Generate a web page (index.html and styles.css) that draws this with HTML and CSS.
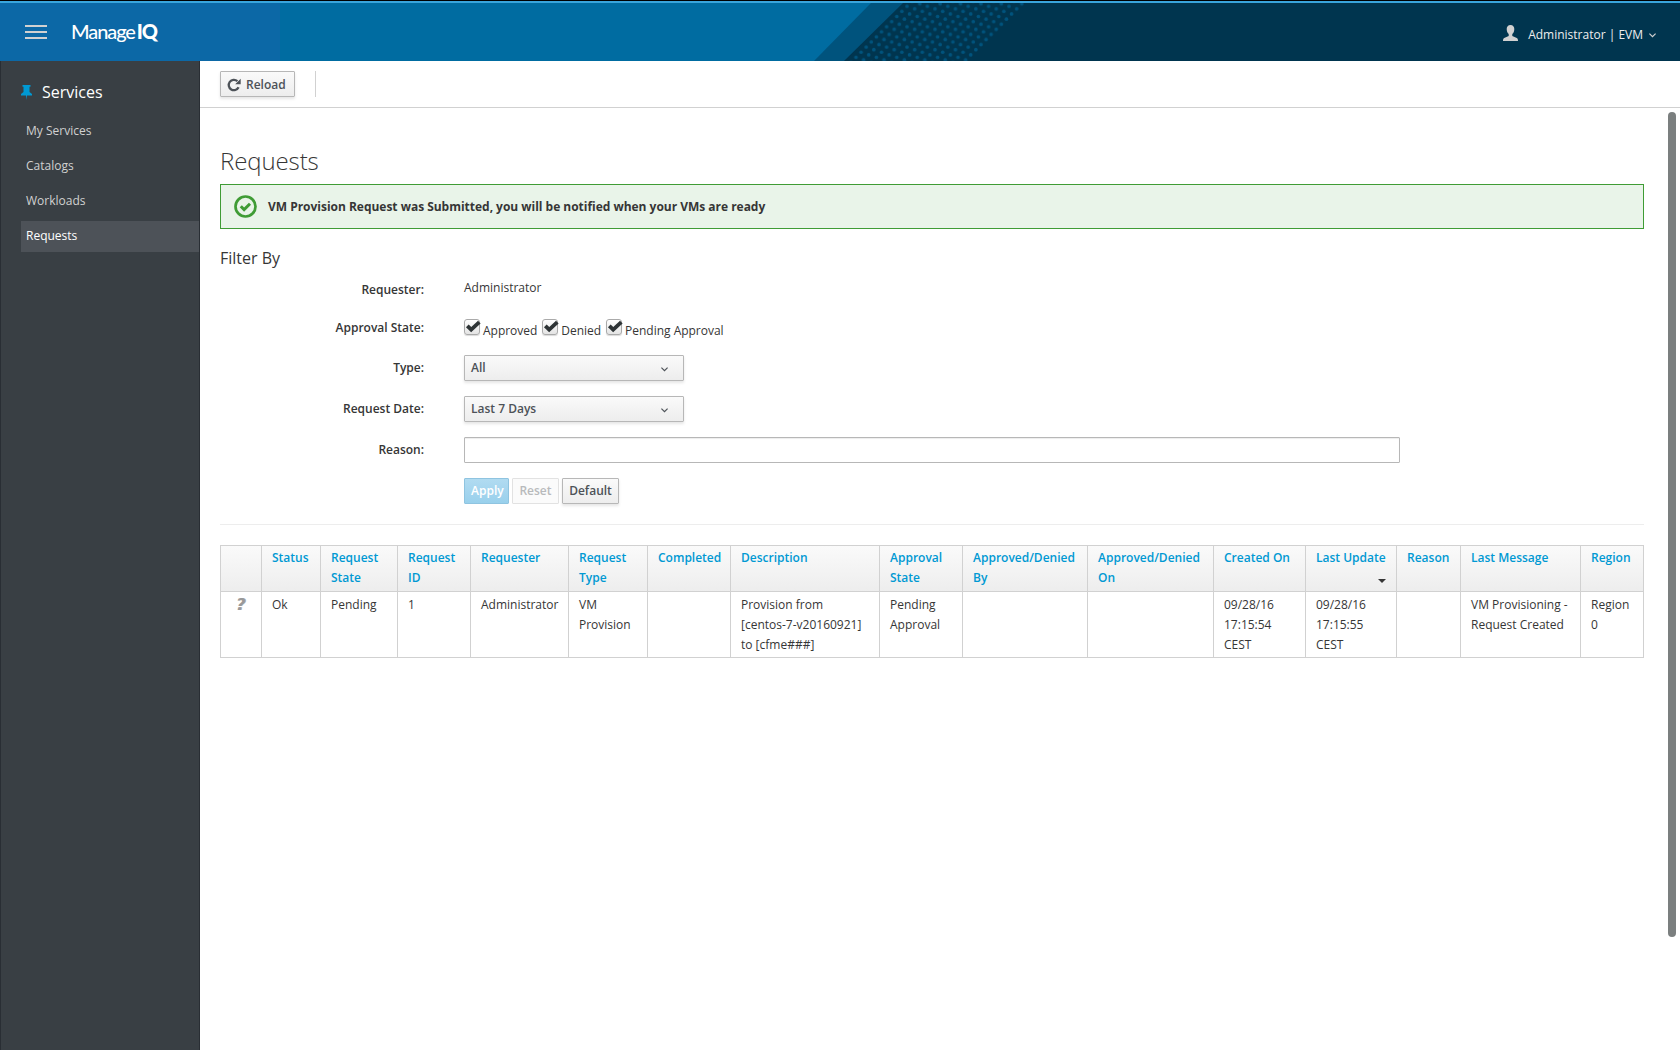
FILE: index.html
```html
<!DOCTYPE html>
<html lang="en">
<head>
    <meta charset="UTF-8">
    <meta name="viewport" content="width=device-width, initial-scale=1.0">
    <title>ManageIQ: Requests</title>
    <link rel="stylesheet" href="styles.css">
</head>
<body>
    <!-- TOP NAVBAR -->
    <header class="navbar">
        <svg class="navbar-bg" width="1680" height="58" viewBox="0 0 1680 58">
            <defs>
                <!-- slanted dot lattice -->
                <pattern id="dots" width="20.4" height="20.4" patternUnits="userSpaceOnUse" patternTransform="translate(907 3.300)">
                    <circle cx="0" cy="0" r="1.8"/>
                    <circle cx="20.4" cy="0" r="1.8"/>
                    <circle cx="0" cy="20.4" r="1.8"/>
                    <circle cx="20.4" cy="20.4" r="1.8"/>
                    <circle cx="15.3" cy="5.1" r="1.8"/>
                    <circle cx="10.2" cy="10.2" r="1.8"/>
                    <circle cx="5.1" cy="15.3" r="1.8"/>
                    <circle cx="7.65" cy="2.55" r="1.8"/>
                    <circle cx="2.55" cy="7.65" r="1.8"/>
                    <circle cx="17.85" cy="12.75" r="1.8"/>
                    <circle cx="12.75" cy="17.85" r="1.8"/>
                </pattern>
            </defs>
            <rect width="280" height="58" fill="#0c68a6"/>
            <path d="M871 0H1680V58H814z" fill="#00537d"/>
            <path d="M903 0H1680V58H844z" fill="#00354f"/>
            <path d="M906 0H1026L968 58H848z" fill="url(#dots)"/>
        </svg>
        <button class="menu-toggle"><span></span><span></span><span></span></button>
        <a class="brand">Manage<b>IQ</b></a>
        <div class="user-menu">
            <svg width="15" height="16" viewBox="0 0 15 16"><path d="M7.500 0C10 0 11.300 1.700 11.300 4c0 2.600-1 4.300-2 5v2l4.500 2c1 .5 1.200 1.500 1.200 3H0c0-1.500.2-2.500 1.200-3l4.500-2V9c-1-.7-2-2.400-2-5C3.700 1.700 5 0 7.500 0z" fill="#d1d1d1"/></svg>
            <span>Administrator | EVM</span>
            <svg class="caret" width="7" height="5" viewBox="0 0 7 5"><path d="M.4.600l3.100 3.100L6.600.6" fill="none" stroke="#d1d1d1" stroke-width="1.200"/></svg>
        </div>
    </header>
    <div class="page">
        <!-- SIDEBAR -->
        <nav class="sidebar">
            <h2>
                <svg width="11" height="15" viewBox="0 0 11 15"><path d="M1.500 0h8v1.800H8.500V7l2.500 2v1.500H6L5.500 15 5 10.500H0V9l2.500-2V1.800h-1z" fill="#0099d3"/></svg>
                Services
            </h2>
            <ul>
                <li>My Services</li>
                <li>Catalogs</li>
                <li>Workloads</li>
                <li class="active">Requests</li>
            </ul>
        </nav>
        <main class="main">
            <div class="toolbar">
                <button class="btn reload">
                    <svg width="14" height="14" viewBox="0 0 14 14"><path d="M11.600 9.300A5.200 5.200 0 1 1 10.400 3.100" fill="none" stroke="#4d5258" stroke-width="2.300"/><path d="M13.700.8v5.400H8.200z" fill="#4d5258"/></svg>
                    Reload
                </button>
                <span class="divider"></span>
            </div>
            <div class="content">
                <h1>Requests</h1>
                <div class="alert">
                    <svg width="23" height="23" viewBox="0 0 23 23"><circle cx="11.500" cy="11.500" r="10" fill="none" stroke="#3f9c35" stroke-width="2.700"/><path d="M6.800 11.300l3.300 3.300 5.900-5.900" fill="none" stroke="#3f9c35" stroke-width="3"/></svg>
                    <strong>VM Provision Request was Submitted, you will be notified when your VMs are ready</strong>
                </div>
                <h3>Filter By</h3>
                <!-- FILTER FORM -->
                <div class="form">
                    <label class="top">Requester:</label>
                    <div class="value">Administrator</div>
                    <label class="top">Approval State:</label>
                    <div class="checks">
                        <span class="check"><svg width="16" height="16" viewBox="0 0 16 16"><path d="M2.300 5.800l3.900 3.900L14.300 2.200" fill="none" stroke="#2e3436" stroke-width="3.800"/></svg></span><span class="text">Approved</span>
                        <span class="check"><svg width="16" height="16" viewBox="0 0 16 16"><path d="M2.300 5.800l3.900 3.900L14.300 2.200" fill="none" stroke="#2e3436" stroke-width="3.800"/></svg></span><span class="text">Denied</span>
                        <span class="check"><svg width="16" height="16" viewBox="0 0 16 16"><path d="M2.300 5.800l3.900 3.900L14.300 2.200" fill="none" stroke="#2e3436" stroke-width="3.800"/></svg></span><span class="text">Pending Approval</span>
                    </div>
                    <label>Type:</label>
                    <button class="btn select">All <svg width="7" height="5" viewBox="0 0 7 5"><path d="M.4.600l3.100 3.100L6.600.6" fill="none" stroke="#4d5258" stroke-width="1.200"/></svg></button>
                    <label>Request Date:</label>
                    <button class="btn select">Last 7 Days <svg width="7" height="5" viewBox="0 0 7 5"><path d="M.4.600l3.100 3.100L6.600.6" fill="none" stroke="#4d5258" stroke-width="1.200"/></svg></button>
                    <label>Reason:</label>
                    <input class="reason" type="text">
                    <div class="buttons">
                        <button class="btn apply">Apply</button>
                        <button class="btn reset">Reset</button>
                        <button class="btn default">Default</button>
                    </div>
                </div>
                <hr>
                <!-- REQUESTS TABLE -->
                <table>
                    <colgroup>
                        <col class="c41"><col class="c59"><col class="c77"><col class="c73"><col class="c98"><col class="c79"><col class="c83"><col class="c149">
                        <col class="c83"><col class="c125"><col class="c126"><col class="c92"><col class="c91"><col class="c64"><col class="c120"><col class="c63">
                    </colgroup>
                    <thead>
                        <tr>
                            <th></th>
                            <th>Status</th>
                            <th>Request<br>State</th>
                            <th>Request<br>ID</th>
                            <th>Requester</th>
                            <th>Request<br>Type</th>
                            <th>Completed</th>
                            <th>Description</th>
                            <th>Approval<br>State</th>
                            <th>Approved/Denied<br>By</th>
                            <th>Approved/Denied<br>On</th>
                            <th>Created On</th>
                            <th>Last Update<span class="sort"></span></th>
                            <th>Reason</th>
                            <th>Last Message</th>
                            <th>Region</th>
                        </tr>
                    </thead>
                    <tbody>
                        <tr>
                            <td class="icon">?</td>
                            <td>Ok</td>
                            <td>Pending</td>
                            <td>1</td>
                            <td>Administrator</td>
                            <td>VM<br>Provision</td>
                            <td></td>
                            <td>Provision from<br>[centos-7-v20160921]<br>to [cfme###]</td>
                            <td>Pending<br>Approval</td>
                            <td></td>
                            <td></td>
                            <td>09/28/16<br>17:15:54<br>CEST</td>
                            <td>09/28/16<br>17:15:55<br>CEST</td>
                            <td></td>
                            <td>VM Provisioning -<br>Request Created</td>
                            <td>Region<br>0</td>
                        </tr>
                    </tbody>
                </table>
            </div>
            <div class="scrollbar"></div>
        </main>
    </div>
</body>
</html>
```

FILE: styles.css
```css
* {
    box-sizing: border-box;
}
body {
    margin: 0;
    height: 1050px;
    display: flex;
    flex-direction: column;
    overflow: hidden;
    border-top: 1px solid #000;
    background: #fff;
    color: #363636;
    font: 12px/20px "Open Sans", sans-serif;
}
button, input {
    font-family: inherit;
}
/* navbar */
.navbar {
    position: relative;
    height: 60px;
    flex: none;
    display: flex;
    align-items: flex-start;
    border-top: 2px solid #39a5dc;
    background: #006ca1;
}
.navbar-bg {
    position: absolute;
    top: 0;
    left: 0;
}
#dots circle {
    fill: #00537d;
}
.menu-toggle {
    position: relative;
    display: flex;
    flex-direction: column;
    gap: 4px;
    width: 22px;
    margin: 22px 0 0 25px;
    padding: 0;
    border: 0;
    background: none;
}
.menu-toggle span {
    height: 2px;
    background: #d1d1d1;
}
.brand {
    position: relative;
    margin: 16px 0 0 24px;
    color: #fff;
    font: 500 20px/24px Lato, sans-serif;
    letter-spacing: -1.1px;
}
.brand b {
    margin-left: 2px;
    font-weight: 900;
}
.user-menu {
    position: relative;
    display: flex;
    margin: 22px 24px 0 auto;
    color: #eee;
    line-height: 20px;
}
.user-menu span {
    margin: 0 6px 0 10px;
}
.user-menu .caret {
    margin-top: 8px;
}
/* sidebar */
.page {
    display: flex;
    flex: 1;
    min-height: 0;
}
.sidebar {
    width: 200px;
    flex: none;
    border-left: 1px solid #292e34;
    border-right: 1px solid #292e34;
    background: #393f44;
}
.sidebar h2 {
    display: flex;
    align-items: center;
    gap: 10px;
    margin: 19px 0 12px 20px;
    color: #fff;
    font-size: 16px;
    font-weight: 400;
    line-height: 24px;
}
.sidebar ul {
    margin: 0 0 0 20px;
    padding: 0;
    list-style: none;
}
.sidebar li {
    height: 31px;
    margin-bottom: 4px;
    padding-left: 5px;
    color: #d1d1d1;
    line-height: 29px;
}
.sidebar .active {
    background: #4d5258;
    color: #fff;
}
/* main area */
.main {
    position: relative;
    flex: 1;
}
.toolbar {
    display: flex;
    height: 47px;
    padding: 10px 20px;
    border-bottom: 1px solid #d1d1d1;
}
.btn {
    height: 26px;
    padding: 0 6px;
    border: 1px solid #b7b7b7;
    border-radius: 1px;
    background: linear-gradient(#fafafa, #ededed);
    box-shadow: 0 2px 3px rgba(3, 3, 3, .1);
    color: #4d5258;
    font-size: 12px;
    font-weight: 600;
    line-height: 22px;
}
.reload {
    display: flex;
    align-items: center;
    gap: 5px;
    width: 75px;
    padding-top: 1px;
}
.divider {
    width: 1px;
    height: 26px;
    margin-left: 20px;
    background: #d1d1d1;
}
.content {
    width: 1424px;
    margin-left: 20px;
}
h1 {
    margin: 39px 0 9px;
    font-size: 24px;
    font-weight: 300;
    line-height: 28px;
    letter-spacing: -.1px;
}
.alert {
    display: flex;
    align-items: center;
    height: 45px;
    padding: 0 13px;
    gap: 11px;
    border: 1px solid #3f9c35;
    background: #e9f4e9;
    letter-spacing: -.02px;
}
h3 {
    margin: 19px 0 0;
    font-size: 16px;
    font-weight: 400;
    line-height: 20px;
}
/* filter form */
.form {
    display: grid;
    grid-template-columns: 204px 1fr;
    grid-template-rows: 38px 49px 41px 41px 41px 26px;
    column-gap: 40px;
    align-items: start;
}
.form label {
    padding-top: 3px;
    font-weight: 600;
    text-align: right;
}
.form .top {
    padding-top: 12px;
}
.value {
    padding-top: 10px;
}
.checks {
    display: flex;
    align-items: flex-start;
    padding-top: 13px;
    letter-spacing: -.02px;
}
.checks .text {
    margin: 2px 5px 0 3px;
}
.check {
    width: 16px;
    height: 16px;
    border: 1px solid #aaa;
    border-radius: 3px;
    background: linear-gradient(#fff, #e4e4e4);
    box-shadow: 0 1px 1px rgba(0, 0, 0, .15);
}
.check svg {
    display: block;
}
.select {
    display: flex;
    align-items: center;
    justify-content: space-between;
    width: 220px;
    padding-right: 15px;
}
.select svg {
    margin-top: 2px;
}
.reason {
    width: 936px;
    height: 26px;
    border: 1px solid #b7b7b7;
    border-radius: 1px;
    box-shadow: inset 0 1px 1px rgba(3, 3, 3, .075);
}
.buttons {
    grid-column: 2;
    display: flex;
    gap: 3px;
}
.apply {
    width: 45px;
    border-color: #8fc4e0;
    background: linear-gradient(#b1dbf1, #99d0ec);
    box-shadow: none;
    color: #fff;
}
.reset {
    width: 47px;
    border-color: #e2e2e2;
    background: #fbfbfb;
    box-shadow: none;
    color: #b8babc;
}
.default {
    width: 57px;
}
hr {
    height: 1px;
    margin: 20px 0;
    border: 0;
    background: #ededed;
}
/* table */
table {
    width: 1424px;
    table-layout: fixed;
    border-collapse: collapse;
}
th, td {
    padding: 2px 0 3px 10px;
    border: 1px solid #d1d1d1;
    text-align: left;
    vertical-align: top;
    white-space: nowrap;
}
td {
    padding: 3px 0 2px 10px;
}
thead tr {
    height: 46px;
    background: linear-gradient(#fafafa, #ededed);
}
tbody tr {
    height: 66px;
}
th {
    color: #0099d3;
    font-weight: 600;
}
.icon {
    padding-left: 15px;
    color: #999;
    font: italic 700 16px/20px "DejaVu Sans", sans-serif;
    text-shadow: 1px 0 #aaa;
}
.sort {
    display: block;
    width: 0;
    margin: 11px 0 0 62px;
    border: 4px solid transparent;
    border-top-color: #363636;
    border-bottom: 0;
}
.c41 { width: 41px; }
.c59 { width: 59px; }
.c63 { width: 63px; }
.c64 { width: 64px; }
.c73 { width: 73px; }
.c77 { width: 77px; }
.c79 { width: 79px; }
.c83 { width: 83px; }
.c91 { width: 91px; }
.c92 { width: 92px; }
.c98 { width: 98px; }
.c120 { width: 120px; }
.c125 { width: 125px; }
.c126 { width: 126px; }
.c149 { width: 149px; }
/* scrollbar thumb runs over the content */
.scrollbar {
    position: absolute;
    top: 51px;
    right: 4px;
    width: 8px;
    height: 825px;
    border-radius: 4px;
    background: #7b7f7f;
}
```
